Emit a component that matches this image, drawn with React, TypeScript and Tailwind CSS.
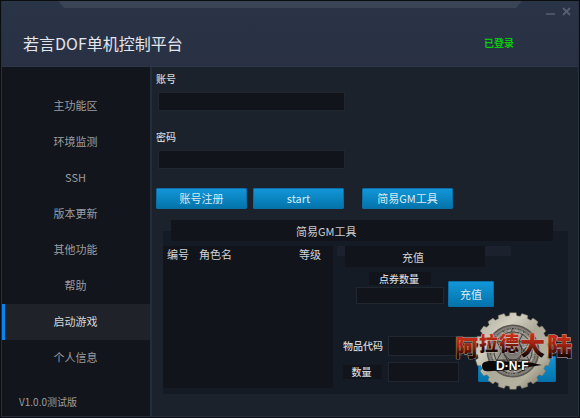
import React, { ReactNode, useState } from 'react';

const menuItems = [
	'主功能区',
	'环境监测',
	'SSH',
	'版本更新',
	'其他功能',
	'帮助',
	'启动游戏',
	'个人信息',
];

function BlueButton({
	className,
	children,
	...rest
}: React.ButtonHTMLAttributes<HTMLButtonElement>) {
	return (
		<button
			type="button"
			className={`rounded-[1px] border border-[#0a6fa8] bg-linear-to-b from-[#1296d8] to-[#0474ab] text-[11px] leading-none text-[#d8eaf4] ${className}`}
			{...rest}
		>
			{children}
		</button>
	);
}

function Field({
	id,
	type = 'text',
	className,
}: {
	id: string;
	type?: string;
	className: string;
}) {
	return (
		<input
			id={id}
			type={type}
			className={`block min-w-0 border border-[#20272f] bg-[#11141a] px-1 text-[10px] text-gray-200 outline-none ${className}`}
		/>
	);
}

function SmallLabel({
	htmlFor,
	className,
	children,
}: {
	htmlFor: string;
	className?: string;
	children: ReactNode;
}) {
	return (
		<label
			htmlFor={htmlFor}
			className={`block text-[10px] font-medium text-[#d2d5da] whitespace-nowrap ${className}`}
		>
			{children}
		</label>
	);
}

// outline of a cog with n teeth, outer radius r1 and root radius r0
function cogPath(cx: number, cy: number, r0: number, r1: number, n: number) {
	const points: string[] = [];
	const step = (Math.PI * 2) / n;

	for (let i = 0; i < n; i++) {
		const a = i * step - Math.PI / 2;
		const corners = [
			[-0.34, r0],
			[-0.26, r1],
			[0.26, r1],
			[0.34, r0],
		];
		for (const [offset, r] of corners) {
			const t = a + offset * step;
			points.push(
				`${(cx + r * Math.cos(t)).toFixed(2)} ${(cy + r * Math.sin(t)).toFixed(2)}`
			);
		}
	}

	return `M${points.join('L')}Z`;
}

const logoChars = [
	{ char: '阿', x: 0, y: 44, size: 23 },
	{ char: '拉', x: 24, y: 39, size: 19 },
	{ char: '德', x: 44, y: 39, size: 20 },
	{ char: '大', x: 65, y: 43, size: 25 },
	{ char: '陆', x: 92, y: 44, size: 25 },
];

function GameLogo() {
	return (
		<svg
			viewBox="0 0 118 80"
			className="absolute -right-[5px] bottom-[2px] h-[80px] w-[118px] pointer-events-none"
			role="img"
			aria-label="阿拉德大陆 D·N·F"
		>
			<defs>
				<linearGradient id="metal" x1="0" y1="0" x2="1" y2="1">
					<stop offset="0" stopColor="#a9a698" />
					<stop offset="0.3" stopColor="#d3d0c2" />
					<stop offset="0.5" stopColor="#aeaa99" />
					<stop offset="0.75" stopColor="#b5b19f" />
					<stop offset="1" stopColor="#69644f" />
				</linearGradient>
				<radialGradient id="plate">
					<stop offset="0" stopColor="#6b6864" />
					<stop offset="0.7" stopColor="#a19e97" />
					<stop offset="1" stopColor="#7d7a73" />
				</radialGradient>
				<linearGradient id="blood" x1="0" y1="0" x2="0" y2="1">
					<stop offset="0.2" stopColor="#d2301a" />
					<stop offset="0.5" stopColor="#a12112" />
					<stop offset="0.8" stopColor="#1c0805" />
				</linearGradient>
			</defs>
			<path
				d={cogPath(58, 39, 35.5, 38.5, 20)}
				fill="url(#metal)"
				stroke="#6f6b5c"
				strokeWidth="0.5"
			/>
			<circle cx="58" cy="39" r="26.5" fill="#5a5751" />
			<circle cx="58" cy="39" r="25" fill="url(#plate)" />
			<g fill="none" stroke="#35332f" strokeWidth="0.9">
				<circle cx="58" cy="39" r="22.5" strokeDasharray="2 1 1 1.5" />
				<circle cx="58" cy="39" r="19" />
				<circle cx="58" cy="39" r="9" />
				<path d="M58 16l-4 8 6 5-5 6M48 19l6 9-9 2M69 20l-5 9 8 2M39 27l8 4M77 29l-9 3" />
				<path d="M41 51l8-3 3 8 6-5 5 7 4-9 8 3M46 57l6 4M70 57l-7 4" />
				<path d="M58 20l16 28H42zM58 58L42 30h32z" />
			</g>
			<g stroke="#d6d3cb" strokeWidth="0.6" fill="none">
				<path d="M50 22l5 8M65 21l-4 8M44 33l6 2M73 34l-6 2M47 53l5-3M69 54l-5-4" />
				<circle cx="58" cy="39" r="20.5" strokeDasharray="3 4" />
			</g>
			<g
				fontFamily="'Noto Sans CJK SC', sans-serif"
				fontWeight="900"
				stroke="#cbb9ae"
				strokeWidth="0.8"
				paintOrder="stroke"
				fill="url(#blood)"
			>
				{logoChars.map(({ char, x, y, size }) => (
					<text key={char} x={x} y={y} fontSize={size}>
						{char}
					</text>
				))}
			</g>
			<path
				d="M27 54c0-5 6-5 11-5l35 1 14 3-13 2-20 3-17 1c-6 1-10 0-10-5z"
				fill="#0b0a0a"
			/>
			<text
				x="41"
				y="58"
				fontFamily="'Liberation Sans', sans-serif"
				fontSize="12"
				fontWeight="700"
				fill="#fff"
				stroke="#0b0a0a"
				strokeWidth="1"
				paintOrder="stroke"
			>
				D·N·F
			</text>
		</svg>
	);
}

function Header() {
	return (
		<header className="flex flex-col h-[66px] bg-linear-to-b from-[#2a3447] to-[#293043] border-b border-[#2b374a]">
			<div className="flex justify-between">
				<svg
					viewBox="0 0 466 7"
					preserveAspectRatio="none"
					className="h-[7px] flex-1 ml-[56px]"
					aria-hidden="true"
				>
					<path d="M0 0H466L460 7H6z" fill="#3b4454" />
				</svg>
				<div className="flex gap-[7px] w-[56px] h-[20px] pt-[5px] pl-[24px] text-[#566072]">
					<button type="button" aria-label="最小化" className="h-[11px]">
						<svg viewBox="0 0 9 9" className="size-[9px]">
							<path d="M0 7h9" stroke="currentColor" strokeWidth="1.5" />
						</svg>
					</button>
					<button type="button" aria-label="关闭" className="h-[11px]">
						<svg viewBox="0 0 9 9" className="size-[9px]">
							<path
								d="M1 1l7 7M8 1L1 8"
								stroke="currentColor"
								strokeWidth="1.8"
							/>
						</svg>
					</button>
				</div>
			</div>
			<div className="flex items-center justify-between h-[46px] pl-[21px] pr-[64px] pb-[2px]">
				<h1 className="text-[16px] leading-[24px] text-[#e3e6ec]">
					若言DOF单机控制平台
				</h1>
				<span className="text-[10px] leading-[16px] font-bold text-[#08c80c]">
					已登录
				</span>
			</div>
		</header>
	);
}

function Sidebar() {
	const [active, setActive] = useState('启动游戏');

	return (
		<nav className="flex flex-col w-[150px] shrink-0 pt-[21px] bg-[#12151b] border-r-2 border-[#242d3b]">
			{menuItems.map((item) => (
				<button
					key={item}
					type="button"
					onClick={() => setActive(item)}
					className={`h-[36px] shrink-0 border-l-3 pr-[4px] pb-[1px] text-[11px] ${
						item === active
							? 'border-[#0a84f0] bg-[#1f2228] text-[#d5d7da]'
							: 'border-transparent text-[#9b9da1]'
					}`}
				>
					{item}
				</button>
			))}
			<p className="mt-auto pl-[17px] pb-[5px] text-[10px] leading-[18px] text-[#9b9da1]">
				V1.0.0测试版
			</p>
		</nav>
	);
}

function GmTools() {
	return (
		<section className="ml-[11px] mr-[10px] mt-[11px]">
			<h2 className="relative z-10 h-[21px] ml-[8px] mr-[15px] pl-[125px] bg-[#11141b] text-[11px] leading-[22px] text-[#c9cdd3]">
				简易GM工具
			</h2>
			<div className="relative flex -mt-[10px] pt-[15px] pb-[6px] bg-[#151b24]">
				<div className="w-[170px] h-[142px] bg-[#11141a]">
					<table className="w-full table-fixed text-[11px] leading-[16px] text-left text-[#d2d5da]">
						<thead>
							<tr>
								<th className="w-[36px] pl-[4px] font-normal">编号</th>
								<th className="font-normal">角色名</th>
								<th className="w-[34px] font-normal">等级</th>
							</tr>
						</thead>
						<tbody />
					</table>
				</div>
				<div className="ml-[4px]">
					<div className="w-[174px] h-[10px] pl-[8px] bg-[#1b222d]">
						<h3 className="w-[140px] h-[21px] pr-[4px] bg-[#11141b] text-[11px] leading-[23px] text-center text-[#d2d5da]">
							充值
						</h3>
					</div>
					<div className="flex items-start gap-[4px] mt-[16px] ml-[19px]">
						<div className="flex flex-col gap-[2px] w-[88px]">
							<SmallLabel
								htmlFor="points"
								className="w-[62px] ml-[13px] pr-[2px] bg-[#11141b] text-center leading-[13px]"
							>
								点券数量
							</SmallLabel>
							<Field id="points" className="w-full h-[17px]" />
						</div>
						<BlueButton className="w-[46px] h-[26px] mt-[9px]">充值</BlueButton>
					</div>
					<div className="flex flex-col gap-[6px] mt-[29px] ml-[6px]">
						<div className="flex items-center gap-[6px]">
							<SmallLabel htmlFor="item-code" className="w-[39px] leading-[14px]">
								物品代码
							</SmallLabel>
							<Field id="item-code" className="w-[120px] h-[20px]" />
						</div>
						<div className="flex items-center gap-[6px] h-[20px]">
							<SmallLabel
								htmlFor="amount"
								className="w-[39px] pr-[2px] bg-[#11141b] text-center leading-[14px]"
							>
								数量
							</SmallLabel>
							<Field id="amount" className="w-[71px] h-[20px]" />
							<BlueButton
								className="w-[78px] h-[26px] ml-[13px] self-end"
								aria-label="发送物品"
							/>
						</div>
					</div>
				</div>
				<GameLogo />
			</div>
		</section>
	);
}

function LaunchPage() {
	return (
		<main className="flex-1 min-w-0 pb-[20px] bg-[#1b222c]">
			<div className="flex flex-col items-start pl-[4px] pt-[4px]">
				<SmallLabel htmlFor="account" className="leading-[16px]">
					账号
				</SmallLabel>
				<Field id="account" className="w-[187px] h-[19px] ml-[2px] mt-[5px]" />
				<SmallLabel htmlFor="password" className="leading-[16px] mt-[18px]">
					密码
				</SmallLabel>
				<Field
					id="password"
					type="password"
					className="w-[187px] h-[19px] ml-[2px] mt-[5px]"
				/>
				<div className="flex mt-[19px]">
					<BlueButton className="w-[91px] h-[21px]">账号注册</BlueButton>
					<BlueButton className="w-[91px] h-[21px] ml-[6px]">start</BlueButton>
					<BlueButton className="w-[91px] h-[21px] ml-[18px]">
						简易GM工具
					</BlueButton>
				</div>
			</div>
			<GmTools />
		</main>
	);
}

export default function App() {
	return (
		<div className="min-h-screen flex flex-col p-px bg-[#0b0d11] font-['Noto_Sans_CJK_SC',sans-serif]">
			<div className="flex-1 flex flex-col border-x border-b border-[#262f3e]">
				<Header />
				<div className="flex-1 flex">
					<Sidebar />
					<LaunchPage />
				</div>
			</div>
		</div>
	);
}
